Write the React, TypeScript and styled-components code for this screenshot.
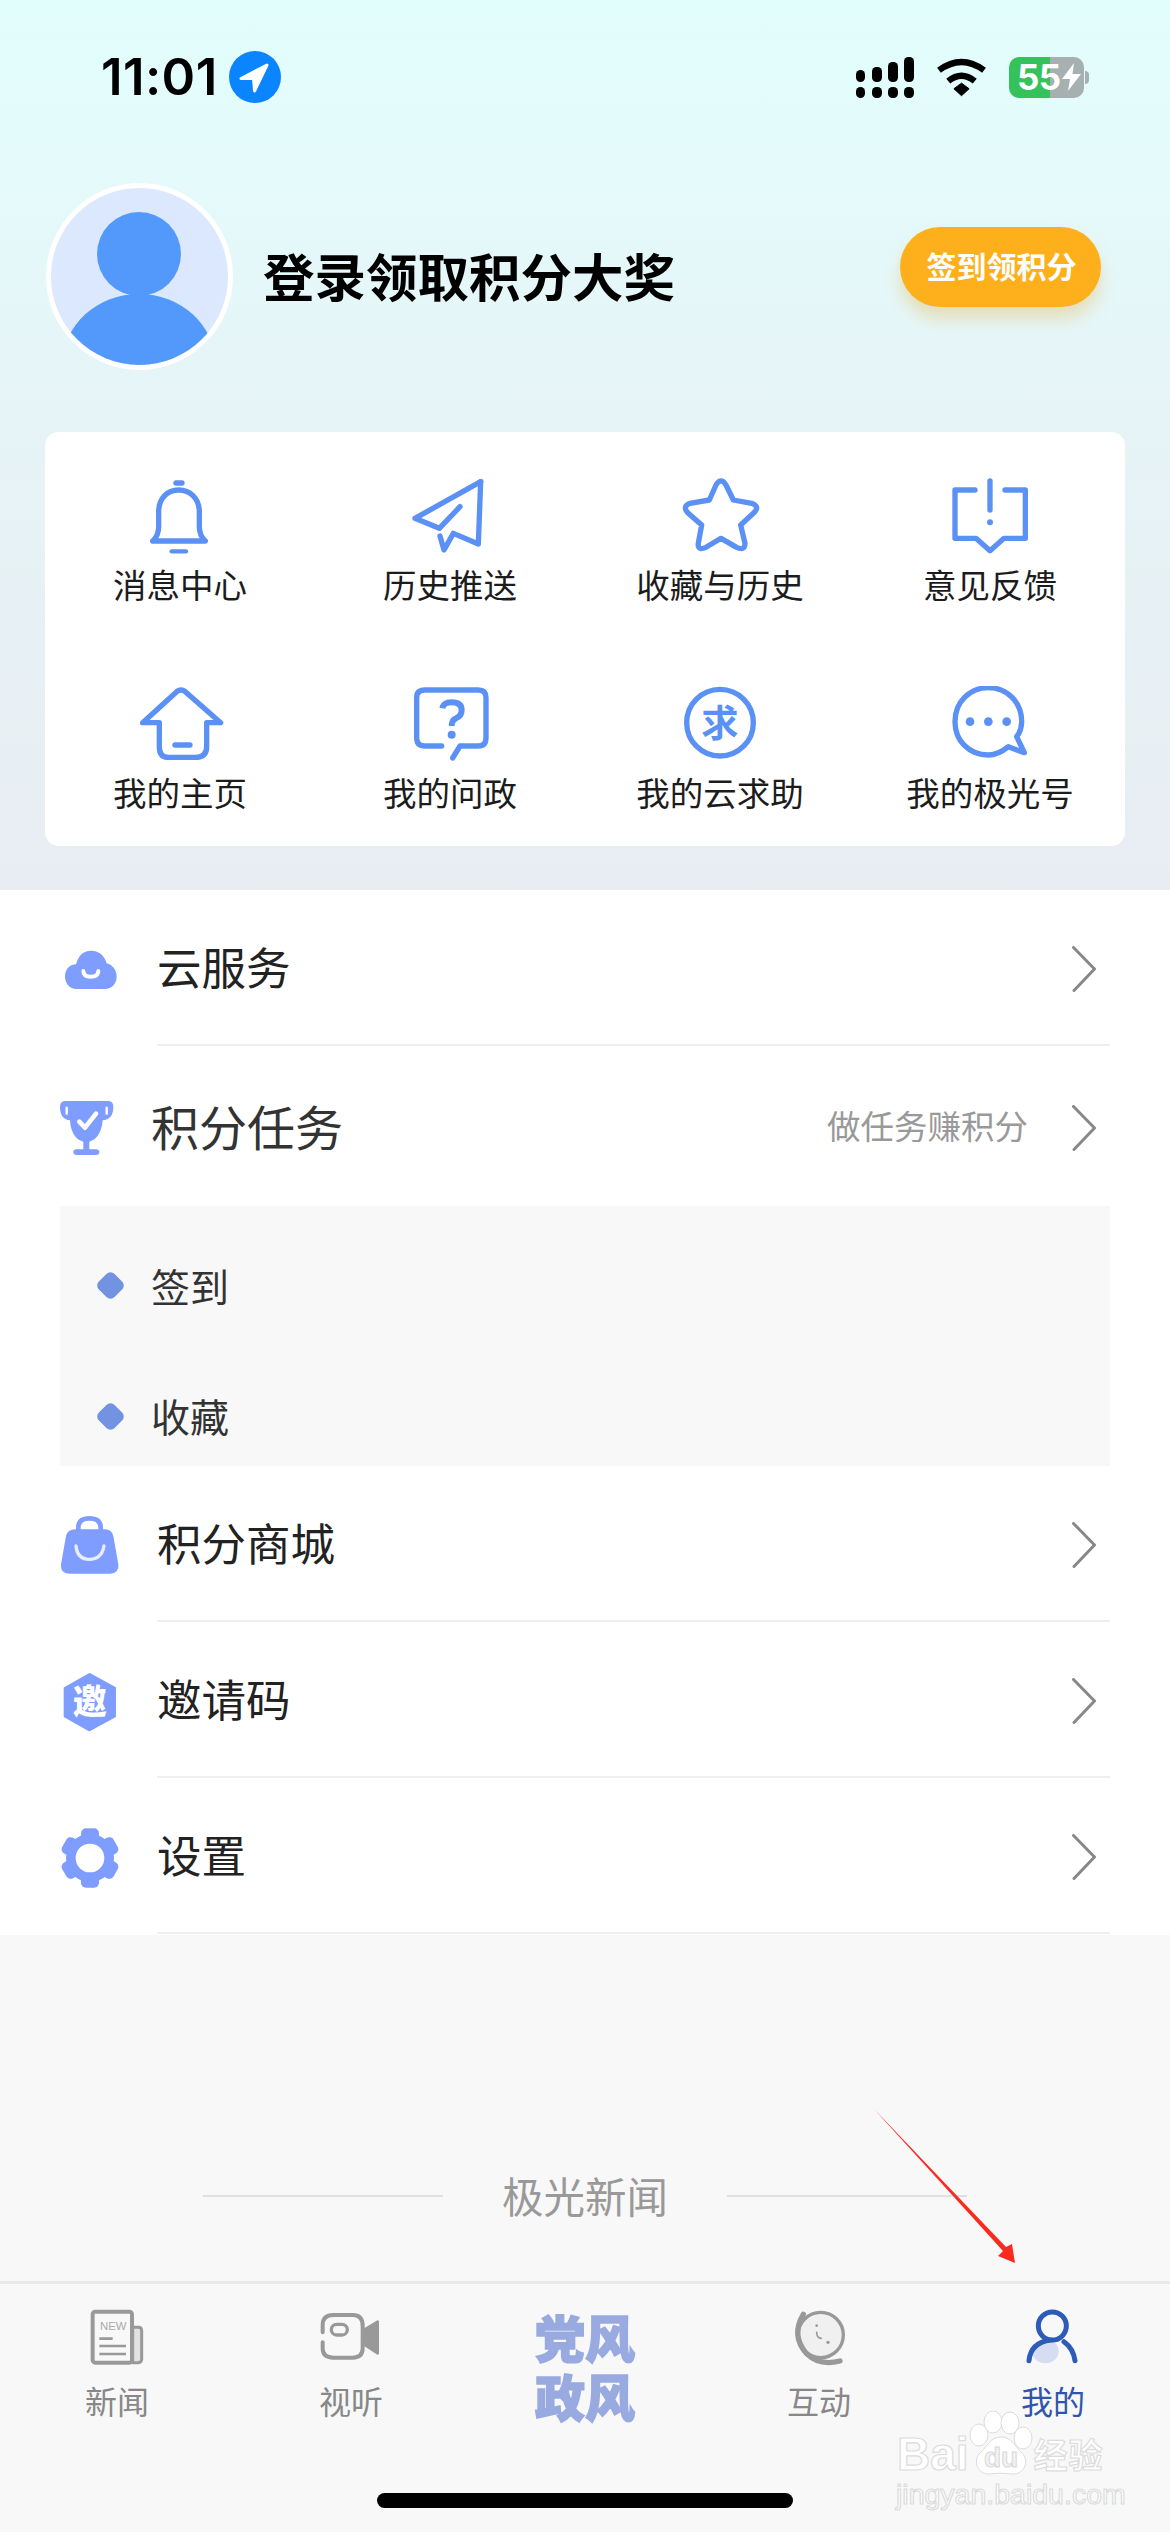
import React from "react";
import styled, { createGlobalStyle } from "styled-components";

const GlobalStyle = createGlobalStyle`
    html, body {
        margin: 0;
        padding: 0;
        background: #f8f8f8;
    }
    * {
        box-sizing: border-box;
    }
`;

const CJK = `"Noto Sans CJK SC", "Noto Sans", sans-serif`;
const ICON_BLUE = "#5b90f5";
const MENU_BLUE = "#7f9cff";
const TAB_GRAY = "#999";
const TAB_BLUE = "#2c5bb8";

const Page = styled.div`
    position: relative;
    width: 1170px;
    height: 2532px;
    overflow: hidden;
    display: flex;
    flex-direction: column;
    font-family: ${CJK};
    background: #f8f8f8;
`;

const Header = styled.header`
    height: 890px;
    flex: none;
    background: linear-gradient(180deg, #e2fdfd 0%, #e4fbfb 16%, #e6f4f6 45%, #e8edf2 100%);
    padding-top: 51px;
`;

const StatusBar = styled.div`
    height: 52px;
    display: flex;
    align-items: center;
    justify-content: space-between;
    padding: 0 86px 0 101px;
`;

const StatusLeft = styled.div`
    display: flex;
    align-items: center;
    gap: 11px;
`;

const Time = styled.span`
    font-family: Inter, "Liberation Sans", sans-serif;
    font-size: 51px;
    font-weight: 600;
    letter-spacing: 0.4px;
    line-height: 52px;
    color: #000;
`;

const StatusRight = styled.div`
    display: flex;
    align-items: center;
`;

const SignalIcon = styled.svg`
    width: 58px;
    height: 41px;
    margin-right: 21px;
`;

const WifiIcon = styled.svg`
    width: 53px;
    height: 42px;
    margin-right: 21px;
`;

const Battery = styled.div`
    position: relative;
    width: 75px;
    height: 41px;
    border-radius: 10px;
    background: linear-gradient(90deg, #35c25b 55%, #a7b0b0 55%);
    display: flex;
    align-items: center;
    padding-left: 8px;
    gap: 1px;
    color: #fff;
    font-family: Inter, "Liberation Sans", sans-serif;
    font-size: 35px;
    font-weight: 700;
    line-height: 41px;
    letter-spacing: -0.5px;

    &::after {
        content: "";
        position: absolute;
        right: -5px;
        top: 14px;
        width: 4px;
        height: 13px;
        border-radius: 0 4px 4px 0;
        background: #a7b0b0;
    }
`;

const Bolt = styled.svg`
    width: 19px;
    height: 28px;
    flex: none;
`;

const Profile = styled.div`
    margin-top: 80px;
    height: 187px;
    display: flex;
    align-items: center;
    padding: 0 69px 0 46px;
`;

const Avatar = styled.div`
    width: 187px;
    height: 187px;
    flex: none;
    border-radius: 50%;
    border: 5px solid #fff;
    background: #dbe8fd;
    overflow: hidden;
    svg {
        display: block;
        width: 100%;
        height: 100%;
    }
`;

const ProfileName = styled.h1`
    margin: -3px 0 0 30px;
    flex: 1;
    font-size: 51.5px;
    font-weight: 700;
    line-height: 70px;
    color: #000;
`;

const CheckInButton = styled.button`
    width: 201px;
    height: 80px;
    margin-top: -20px;
    border: 0;
    padding: 0 0 4px 2px;
    border-radius: 40px;
    background: #fdb01c;
    box-shadow: 0 12px 16px rgba(230, 180, 70, 0.35);
    color: #fff;
    font-family: ${CJK};
    font-size: 30px;
    font-weight: 700;
`;

const ShortcutCard = styled.section`
    margin: 62px 45px 0;
    height: 414px;
    padding-top: 46px;
    border-radius: 14px;
    background: #fff;
    display: grid;
    grid-template-columns: repeat(4, 1fr);
    grid-auto-rows: 129px;
    row-gap: 79px;
`;

const Shortcut = styled.div`
    display: flex;
    flex-direction: column;
    align-items: center;
`;

const ShortcutIcon = styled.svg`
    width: 90px;
    height: 80px;
    fill: none;
    stroke: ${ICON_BLUE};
    stroke-width: 16;
    stroke-linecap: round;
    stroke-linejoin: round;
`;

const ShortcutLabel = styled.span`
    margin-top: 4px;
    font-size: 33.5px;
    line-height: 44px;
    color: #1c1c1c;
    white-space: nowrap;
`;

const MenuList = styled.section`
    flex: none;
    background: #fff;
    height: 1045px;
`;

const MenuRow = styled.div<{ $height: number; $slot: number; $divider: boolean }>`
    height: ${(p) => p.$height}px;
    padding: 0 60px;
    display: flex;

    > div:first-child {
        width: ${(p) => p.$slot}px;
    }
    > div:last-child {
        border-bottom: ${(p) => (p.$divider ? "2px solid #efefef" : "0")};
    }
`;

const MenuIconSlot = styled.div`
    flex: none;
    display: flex;
    align-items: center;
    padding-top: 3px;
    svg {
        display: block;
        width: 70px;
        height: 70px;
    }
`;

const MenuBody = styled.div`
    flex: 1;
    display: flex;
    align-items: center;
    padding: 3px 14px 0 0;
`;

const MenuTitle = styled.span<{ $large?: boolean }>`
    flex: 1;
    margin-top: -5px;
    font-size: ${(p) => (p.$large ? 48 : 44.5)}px;
    line-height: 60px;
    color: ${(p) => (p.$large ? "#333" : "#222")};
`;

const MenuHint = styled.span`
    margin: -5px 44px 0 0;
    font-size: 33.5px;
    line-height: 44px;
    color: #999;
`;

const Chevron = styled.svg`
    width: 24px;
    height: 46px;
    fill: none;
    stroke: #888;
    stroke-width: 3;
    stroke-linecap: round;
    stroke-linejoin: round;
`;

const TaskPanel = styled.div`
    margin: 0 60px;
    height: 260px;
    padding: 30px 0 0 37px;
    background: #f8f8f8;
    display: flex;
    flex-direction: column;
    gap: 31px;
`;

const TaskRow = styled.div`
    height: 100px;
    display: flex;
    align-items: center;
    gap: 27px;
`;

const TaskDot = styled.i`
    width: 27px;
    height: 27px;
    border-radius: 7px;
    background: #7193e2;
    transform: rotate(45deg) scale(0.82);
`;

const TaskLabel = styled.span`
    margin-top: -2px;
    font-size: 39px;
    line-height: 50px;
    color: #333;
`;

const Footer = styled.div`
    flex: 1;
    padding-top: 221px;
    background: #f8f8f8;
`;

const Brand = styled.div`
    height: 80px;
    display: flex;
    align-items: center;
    justify-content: center;
    gap: 59px;
`;

const BrandLine = styled.span`
    width: 240px;
    height: 2px;
    background: #e0e0e0;
`;

const BrandName = styled.span`
    margin-top: -3px;
    font-size: 41.5px;
    line-height: 60px;
    color: #999;
`;

const TabBar = styled.nav`
    flex: none;
    height: 251px;
    border-top: 3px solid #e9e9e9;
    background: #f8f8f8;
`;

const Tabs = styled.div`
    height: 209px;
    display: grid;
    grid-template-columns: repeat(5, 234px);
`;

const Tab = styled.div`
    padding-top: 21px;
    display: flex;
    flex-direction: column;
    align-items: center;
`;

const TabIcon = styled.svg<{ $color: string }>`
    width: 90px;
    height: 65px;
    fill: none;
    stroke: ${(p) => p.$color};
    stroke-width: 12;
    stroke-linecap: round;
    stroke-linejoin: round;
`;

const TabLabel = styled.span<{ $active?: boolean }>`
    margin-top: 8px;
    font-size: 32px;
    line-height: 44px;
    color: ${(p) => (p.$active ? "#2f55ad" : "#888")};
`;

const TabLogo = styled.div`
    margin-top: 2px;
    width: 100px;
    font-size: 50px;
    font-weight: 900;
    line-height: 59px;
    color: #98aae0;
    text-align: center;
    -webkit-text-stroke: 1.5px #98aae0;
`;

const HomeIndicator = styled.div`
    width: 416px;
    height: 15px;
    margin: 0 auto;
    border-radius: 8px;
    background: #000;
`;

// red annotation arrow drawn on top of the screenshot
const Annotation = styled.svg`
    position: absolute;
    left: 860px;
    top: 2100px;
    width: 170px;
    height: 175px;
`;

const Watermark = styled.div`
    position: absolute;
    left: 896px;
    top: 2405px;
    width: 212px;
    height: 102px;
    color: #fff;
    font-family: "Liberation Sans", ${CJK};
    -webkit-text-stroke: 1.2px #dcdcdc;
`;

const WatermarkTop = styled.div`
    position: absolute;
    left: 1px;
    right: 0;
    top: 26px;
    display: flex;
    align-items: center;
    font-size: 46px;
    font-weight: 700;
    line-height: 46px;
`;

const WatermarkPaw = styled.svg`
    width: 66px;
    height: 66px;
    margin: -20px 0 0 -1px;
    flex: none;
    -webkit-text-stroke: 0;
`;

const WatermarkCjk = styled.span`
    font-family: ${CJK};
    font-size: 34px;
    letter-spacing: 1px;
    line-height: 46px;
`;

const WatermarkUrl = styled.div`
    position: absolute;
    left: 0;
    top: 73px;
    font-size: 28.5px;
    line-height: 32px;
    white-space: nowrap;
`;

const shortcuts = [
    {
        label: "消息中心",
        box: "15 24 270 240",
        icon: (
            <>
                <path d="M68 213Q86 196 86 170V125C86 85 112 60 146 60C180 60 208 85 208 125V170Q208 196 226 213Z" />
                <path d="M138 39H156" />
                <path d="M125 244H168" strokeWidth="13" />
            </>
        ),
    },
    {
        label: "历史推送",
        box: "825 24 270 240",
        icon: (
            <>
                <path d="M1052 35L855 145L928 175L990 110" />
                <path d="M1052 35L1045 222L970 190L942 240L930 198" />
            </>
        ),
    },
    {
        label: "收藏与历史",
        box: "15 24 270 240",
        icon: (
            <path d="M138 45Q153 20 168 45L190 90L245 100Q272 110 250 130L212 165L225 220Q225 243 200 232L153 205L108 232Q82 243 85 220L95 165L55 130Q35 110 60 100L118 90Z" />
        ),
    },
    {
        label: "意见反馈",
        box: "825 24 270 240",
        icon: (
            <>
                <path d="M915 60H855V205H918L960 242L1002 205H1066V60H1005" />
                <path d="M960 33V120" />
                <circle cx="960" cy="157" r="9" fill={ICON_BLUE} stroke="none" />
            </>
        ),
    },
    {
        label: "我的主页",
        box: "15 648 270 240",
        icon: (
            <>
                <path d="M38 758L140 665Q153 655 166 665L272 758H230V830Q230 862 195 862H115Q88 862 88 830V758Z" />
                <path d="M135 825H180" />
            </>
        ),
    },
    {
        label: "我的问政",
        box: "825 648 270 240",
        icon: (
            <>
                <path d="M935 828H885Q860 828 860 803V683Q860 660 885 660H1045Q1068 660 1068 683V803Q1068 828 1045 828H990L968 864" />
                <path d="M937 715Q940 697 965 697Q995 697 995 720Q995 738 978 745Q965 750 965 768" strokeWidth="18" strokeLinecap="butt" />
                <circle cx="965" cy="794" r="12" fill={ICON_BLUE} stroke="none" />
            </>
        ),
    },
    {
        label: "我的云求助",
        box: "15 648 270 240",
        icon: (
            <>
                <circle cx="150" cy="758" r="100" />
                <text
                    x="150"
                    y="800"
                    textAnchor="middle"
                    fontSize="112"
                    fontWeight="700"
                    fontFamily={CJK}
                    fill={ICON_BLUE}
                    stroke="none"
                >
                    求
                </text>
            </>
        ),
    },
    {
        label: "我的极光号",
        box: "825 648 270 240",
        icon: (
            <>
                <path d="M1015 830Q985 855 955 855C895 855 855 810 855 755C855 695 900 653 955 653C1010 653 1055 695 1055 755Q1055 780 1040 800L1063 848Z" />
                <g fill={ICON_BLUE} stroke="none">
                    <circle cx="900" cy="755" r="13" />
                    <circle cx="955" cy="755" r="13" />
                    <circle cx="1010" cy="755" r="13" />
                </g>
            </>
        ),
    },
];

const ChevronRight = () => (
    <Chevron viewBox="0 0 24 46">
        <path d="M1.5 1.5L22.5 23L2 44.5" />
    </Chevron>
);

const CloudIcon = () => (
    <svg viewBox="30 10 210 210">
        <path
            fill={MENU_BLUE}
            d="M80 172C55 172 45 150 45 135C45 110 62 98 78 98C85 72 100 57 122 57C150 57 165 75 170 95C188 100 200 115 200 135C200 155 185 172 165 172Z"
        />
        <path d="M100 118Q100 135 122 135Q145 135 145 118" fill="none" stroke="#fff" strokeWidth="12" strokeLinecap="round" />
    </svg>
);

const TrophyIcon = () => (
    <svg viewBox="30 486 210 210">
        <path
            fill={MENU_BLUE}
            d="M45 510H175Q190 510 190 528Q190 565 158 568C155 610 135 628 118 632V655H138Q148 655 148 663Q148 672 138 672H80Q70 672 70 663Q70 655 80 655H100V632C82 628 62 610 60 568Q30 565 30 528Q30 510 45 510Z"
        />
        <g fill="none" stroke="#fff" strokeLinecap="round" strokeLinejoin="round">
            <path d="M50 530V548M170 530V548" strokeWidth="7" />
            <path d="M88 572L105 590L138 548" strokeWidth="14" />
        </g>
    </svg>
);

const BagIcon = () => (
    <svg viewBox="30 30 210 210">
        <path d="M85 90V80Q85 52 118 52Q152 52 152 80V90" fill="none" stroke={MENU_BLUE} strokeWidth="14" />
        <path fill={MENU_BLUE} d="M75 85H165Q185 85 190 105L205 190Q208 218 180 218H58Q30 218 33 190L48 105Q53 85 75 85Z" />
        <path d="M78 135Q82 175 118 175Q155 175 162 135" fill="none" stroke="#e8ecff" strokeWidth="10" strokeLinecap="round" />
    </svg>
);

const InviteIcon = () => (
    <svg viewBox="30 498 210 210">
        <path
            fill={MENU_BLUE}
            stroke={MENU_BLUE}
            strokeWidth="6"
            strokeLinejoin="round"
            d="M118 519L195 561V646L118 688L44 646V561Z"
        />
        <text x="119" y="640" textAnchor="middle" fontSize="102" fontWeight="900" fontFamily={CJK} fill="#fff">
            邀
        </text>
    </svg>
);

const GearIcon = () => (
    <svg viewBox="30 966 210 210">
        <g fill={MENU_BLUE}>
            <circle cx="120" cy="1071" r="72" />
            {[0, 60, 120, 180, 240, 300].map((angle) => (
                <rect key={angle} x="93" y="982" width="54" height="52" rx="15" transform={`rotate(${angle} 120 1071)`} />
            ))}
        </g>
        <circle cx="120" cy="1071" r="43" fill="#fff" />
    </svg>
);

const App = () => {
    return (
        <Page>
            <GlobalStyle />
            <Header>
                <StatusBar>
                    <StatusLeft>
                        <Time>11:01</Time>
                        <svg width="52" height="52" viewBox="0 0 52 52">
                            <circle cx="26" cy="26" r="26" fill="#0a84ff" />
                            <path d="M38 14L12 27.5H24.5L25.5 40Z" fill="#fff" stroke="#fff" strokeWidth="3" strokeLinejoin="round" />
                        </svg>
                    </StatusLeft>
                    <StatusRight>
                        <SignalIcon viewBox="0 0 58 41">
                            <rect x="0" y="13" width="9" height="12" rx="4.5" />
                            <rect x="16" y="10" width="10" height="15" rx="4.5" />
                            <rect x="32" y="5" width="10" height="20" rx="4.5" />
                            <rect x="48" y="0" width="10" height="25" rx="4.5" />
                            <rect x="0" y="30" width="9" height="11" rx="4.5" />
                            <rect x="16" y="30" width="10" height="11" rx="4.5" />
                            <rect x="32" y="30" width="10" height="11" rx="4.5" />
                            <rect x="48" y="30" width="10" height="11" rx="4.5" />
                        </SignalIcon>
                        <WifiIcon viewBox="405 80 160 125">
                            <g fill="none" stroke="#000" strokeWidth="19">
                                <path d="M417 122Q485 72 553 122" />
                                <path d="M445 155Q485 122 525 155" />
                            </g>
                            <path d="M462 178L485 161L508 178L485 199Z" stroke="#000" strokeWidth="3" strokeLinejoin="round" />
                        </WifiIcon>
                        <Battery>
                            55
                            <Bolt viewBox="0 0 19 28">
                                <path d="M12 0L0 16H8L6 28L19 11H10.5Z" fill="#fff" />
                            </Bolt>
                        </Battery>
                    </StatusRight>
                </StatusBar>
                <Profile>
                    <Avatar>
                        <svg viewBox="0 0 177 177">
                            <circle cx="88" cy="66" r="42" fill="#5399fc" />
                            <ellipse cx="88" cy="175" rx="76" ry="69" fill="#5399fc" />
                        </svg>
                    </Avatar>
                    <ProfileName>登录领取积分大奖</ProfileName>
                    <CheckInButton>签到领积分</CheckInButton>
                </Profile>
                <ShortcutCard>
                    {shortcuts.map((item) => (
                        <Shortcut key={item.label}>
                            <ShortcutIcon viewBox={item.box}>{item.icon}</ShortcutIcon>
                            <ShortcutLabel>{item.label}</ShortcutLabel>
                        </Shortcut>
                    ))}
                </ShortcutCard>
            </Header>

            <MenuList>
                <MenuRow $height={156} $slot={97} $divider>
                    <MenuIconSlot>
                        <CloudIcon />
                    </MenuIconSlot>
                    <MenuBody>
                        <MenuTitle>云服务</MenuTitle>
                        <ChevronRight />
                    </MenuBody>
                </MenuRow>
                <MenuRow $height={160} $slot={91} $divider={false}>
                    <MenuIconSlot>
                        <TrophyIcon />
                    </MenuIconSlot>
                    <MenuBody>
                        <MenuTitle $large>积分任务</MenuTitle>
                        <MenuHint>做任务赚积分</MenuHint>
                        <ChevronRight />
                    </MenuBody>
                </MenuRow>
                <TaskPanel>
                    <TaskRow>
                        <TaskDot />
                        <TaskLabel>签到</TaskLabel>
                    </TaskRow>
                    <TaskRow>
                        <TaskDot />
                        <TaskLabel>收藏</TaskLabel>
                    </TaskRow>
                </TaskPanel>
                <MenuRow $height={156} $slot={97} $divider>
                    <MenuIconSlot>
                        <BagIcon />
                    </MenuIconSlot>
                    <MenuBody>
                        <MenuTitle>积分商城</MenuTitle>
                        <ChevronRight />
                    </MenuBody>
                </MenuRow>
                <MenuRow $height={156} $slot={97} $divider>
                    <MenuIconSlot>
                        <InviteIcon />
                    </MenuIconSlot>
                    <MenuBody>
                        <MenuTitle>邀请码</MenuTitle>
                        <ChevronRight />
                    </MenuBody>
                </MenuRow>
                <MenuRow $height={156} $slot={97} $divider>
                    <MenuIconSlot>
                        <GearIcon />
                    </MenuIconSlot>
                    <MenuBody>
                        <MenuTitle>设置</MenuTitle>
                        <ChevronRight />
                    </MenuBody>
                </MenuRow>
            </MenuList>

            <Footer>
                <Brand>
                    <BrandLine />
                    <BrandName>极光新闻</BrandName>
                    <BrandLine />
                </Brand>
            </Footer>

            <TabBar>
                <Tabs>
                    <Tab>
                        <TabIcon $color={TAB_GRAY} viewBox="6 30 270 195">
                            <path d="M188 97H205Q215 97 215 107V193Q215 203 205 203H188Z" fill="#e2e2e2" strokeWidth="9" />
                            <rect x="68" y="50" width="118" height="153" rx="8" />
                            <text x="90" y="106" fontSize="34" fontFamily="Liberation Sans" fill="#aaa" stroke="none">
                                NEW
                            </text>
                            <path d="M88 131H128M88 153H168M88 177H168" strokeWidth="8" strokeLinecap="butt" />
                        </TabIcon>
                        <TabLabel>新闻</TabLabel>
                    </Tab>
                    <Tab>
                        <TabIcon $color={TAB_GRAY} viewBox="708 30 270 195">
                            <path d="M758 112V90Q758 60 790 60H848Q878 60 878 92V160Q878 188 848 188H790Q758 188 758 160V142" />
                            <path d="M882 105L923 80V175L882 148Z" fill={TAB_GRAY} strokeWidth="8" />
                            <rect x="784" y="88" width="48" height="32" rx="16" strokeWidth="10" />
                        </TabIcon>
                        <TabLabel>视听</TabLabel>
                    </Tab>
                    <Tab>
                        <TabLogo>党风政风</TabLogo>
                    </Tab>
                    <Tab>
                        <TabIcon $color={TAB_GRAY} viewBox="0 0 270 195">
                            <circle cx="140" cy="90" r="68" fill="#f0f0f0" strokeWidth="10" />
                            <path d="M88 28Q50 92 98 146Q136 184 198 168" strokeWidth="16" />
                            <path d="M128 82Q128 100 142 100" strokeWidth="5" />
                            <circle cx="128" cy="62" r="4" fill={TAB_GRAY} stroke="none" />
                            <circle cx="162" cy="112" r="5" fill={TAB_GRAY} stroke="none" />
                        </TabIcon>
                        <TabLabel>互动</TabLabel>
                    </Tab>
                    <Tab>
                        <TabIcon $color={TAB_BLUE} viewBox="444 45 270 195">
                            <ellipse cx="556" cy="184" rx="40" ry="36" fill="#d6ddf3" stroke="none" />
                            <circle cx="577" cy="108" r="42" strokeWidth="15" />
                            <path d="M507 212Q512 158 572 150" strokeWidth="15" />
                            <path d="M612 155Q640 175 645 212" strokeWidth="15" />
                        </TabIcon>
                        <TabLabel $active>我的</TabLabel>
                    </Tab>
                </Tabs>
                <HomeIndicator />
            </TabBar>

            <Annotation viewBox="860 2100 170 175">
                <path d="M874 2109L1006 2247L1012 2244L1015 2263L998 2256L1003 2251Z" fill="#fb2a20" />
            </Annotation>

            <Watermark>
                <WatermarkTop>
                    Bai
                    <WatermarkPaw viewBox="0 0 66 66">
                        <g fill="#fff" stroke="#dcdcdc" strokeWidth="1">
                            <ellipse cx="11" cy="24" rx="9" ry="11" />
                            <ellipse cx="25" cy="11" rx="9" ry="11" />
                            <ellipse cx="42" cy="12" rx="9" ry="11" />
                            <ellipse cx="55" cy="27" rx="9" ry="11" />
                            <path d="M33 26C44 26 47 36 54 42C62 50 56 64 44 63C38 62 28 62 22 63C10 64 4 50 12 42C19 36 22 26 33 26Z" />
                        </g>
                        <text
                            x="33"
                            y="56"
                            textAnchor="middle"
                            fontSize="28"
                            fontWeight="700"
                            fontFamily="Liberation Sans"
                            fill="#f2f2f2"
                            stroke="#d8d8d8"
                            strokeWidth="1"
                        >
                            du
                        </text>
                    </WatermarkPaw>
                    <WatermarkCjk>经验</WatermarkCjk>
                </WatermarkTop>
                <WatermarkUrl>jingyan.baidu.com</WatermarkUrl>
            </Watermark>
        </Page>
    );
};

export default App;
